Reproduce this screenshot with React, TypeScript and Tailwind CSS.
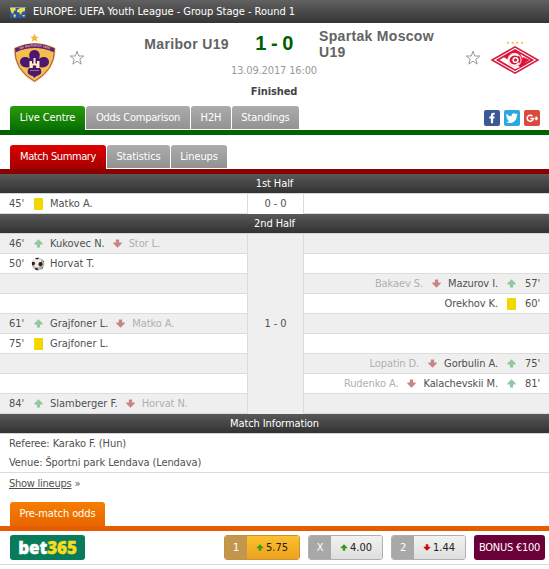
import clsx from 'clsx';

type EventIcon = 'sub' | 'card' | 'goal';

interface MatchEvent {
  side: 'home' | 'away';
  time: string;
  icon: EventIcon;
  player: string;
  off?: string;
}

const secondHalf: MatchEvent[] = [
  { side: 'home', time: "46'", icon: 'sub', player: 'Kukovec N.', off: 'Stor L.' },
  { side: 'home', time: "50'", icon: 'goal', player: 'Horvat T.' },
  { side: 'away', time: "57'", icon: 'sub', player: 'Mazurov I.', off: 'Bakaev S.' },
  { side: 'away', time: "60'", icon: 'card', player: 'Orekhov K.' },
  { side: 'home', time: "61'", icon: 'sub', player: 'Grajfoner L.', off: 'Matko A.' },
  { side: 'home', time: "75'", icon: 'card', player: 'Grajfoner L.' },
  { side: 'away', time: "75'", icon: 'sub', player: 'Gorbulin A.', off: 'Lopatin D.' },
  { side: 'away', time: "81'", icon: 'sub', player: 'Kalachevskii M.', off: 'Rudenko A.' },
  { side: 'home', time: "84'", icon: 'sub', player: 'Slamberger F.', off: 'Horvat N.' },
];

const firstHalf: MatchEvent[] = [
  { side: 'home', time: "45'", icon: 'card', player: 'Matko A.' },
];

function Arrow({ down, className }: { down?: boolean; className?: string }) {
  return (
    <svg viewBox="0 0 10 10" className={clsx('shrink-0', down && 'rotate-180', className)} fill="currentColor">
      <path d="M5 0.3 L9.7 5 V6 H6.8 V9.5 H3.2 V6 H0.3 V5 Z" />
    </svg>
  );
}

function Ball() {
  return (
    <svg viewBox="0 0 14 14" className="w-3.5 h-3.5">
      <circle cx="7" cy="7" r="6.3" fill="#bdb5ae" />
      <circle cx="6" cy="5.6" r="4.6" fill="#efebe7" />
      <path d="M4.2 0.9 L8.2 0.7 L7 2.2 L5 2.2 Z M1 5 L3.4 4.8 L4.2 7 L2.6 8.6 L1 8 Z M7.8 5.4 L10.6 4.8 L11.8 7.4 L9.8 9.6 L7.4 8.2 Z M4 11 L6.2 11 L7.4 13.3 L4.8 12.9 Z M11.4 2.8 L12.9 4.8 L12.2 5.2 Z M10.4 11.4 L12.6 9.6 L11 12.2 Z" fill="#2e211e" />
    </svg>
  );
}

function Icon({ type }: { type: EventIcon }) {
  return (
    <span className="w-3.5 flex justify-center shrink-0">
      {type === 'sub' && <Arrow className="w-[9px] h-[9px] text-[#8fc79f]" />}
      {type === 'card' && <span className="w-[9px] h-3 rounded-[1px] bg-[#f3d800]" />}
      {type === 'goal' && <Ball />}
    </span>
  );
}

function EventCell({ event, side, shaded }: { event: MatchEvent; side: 'home' | 'away'; shaded: boolean }) {
  return (
    <div
      className={clsx(
        'h-5 flex items-center border-b border-[#dcdcdc]',
        side === 'home' ? 'pl-[9px]' : 'pr-[9px] flex-row-reverse',
        shaded ? 'bg-[#efefef]' : 'bg-white',
      )}
    >
      {event.side === side && (
        <>
          <span className={clsx('w-[15px]', side === 'home' ? 'mr-[7px]' : 'ml-[7px]')}>{event.time}</span>
          <Icon type={event.icon} />
          <span className={side === 'home' ? 'ml-[5px] tracking-normal' : 'mr-[6px]'}>{event.player}</span>
          {event.off && (
            <>
              <Arrow down className={clsx('w-[9px] h-[9px] text-[#c98385]', side === 'home' ? 'ml-[8px] mr-[7px]' : 'mr-[7px] ml-[9px]')} />
              <span className="text-[#b0b0b0]">{event.off}</span>
            </>
          )}
        </>
      )}
    </div>
  );
}

function Half({ title, score, events, shadeFirst }: { title: string; score: string; events: MatchEvent[]; shadeFirst: boolean }) {
  return (
    <section>
      <DarkBar>{title}</DarkBar>
      <div className="grid grid-cols-[247px_57px_1fr]">
        <div>
          {events.map((e, i) => (
            <EventCell key={i} event={e} side="home" shaded={shadeFirst && i % 2 === 0} />
          ))}
        </div>
        <div className={clsx('flex items-center justify-center border-x border-[#dcdcdc]', shadeFirst && 'bg-[#efefef]')}>
          {score}
        </div>
        <div>
          {events.map((e, i) => (
            <EventCell key={i} event={e} side="away" shaded={shadeFirst && i % 2 === 0} />
          ))}
        </div>
      </div>
    </section>
  );
}

function DarkBar({ children }: { children: string }) {
  return (
    <div className="h-5 flex items-center justify-center text-white bg-linear-to-b from-[#595959] to-[#323232] border-b border-[#d5d5d5]">
      {children}
    </div>
  );
}

function Tab({ children, className }: { children: string; className: string }) {
  return (
    <span className={clsx('flex items-center justify-center rounded-t-[3px] text-white', className)}>
      {children}
    </span>
  );
}

const grayTab = 'h-[23px] bg-linear-to-b from-[#acacac] to-[#929292]';

function Star() {
  return (
    <svg viewBox="0 0 16 16" className="w-4 h-4" fill="#fff" stroke="#999" strokeWidth="1">
      <path d="M8 1.2 L9.7 6 H14.8 L10.8 9.1 L12.2 14.1 L8 11.2 L3.8 14.1 L5.2 9.1 L1.2 6 H6.3 Z" />
    </svg>
  );
}

function MariborCrest() {
  return (
    <svg viewBox="0 0 44 50" className="w-11 h-[50px] overflow-visible">
      <path d="M21.5 0.5 L22.8 3.7 H26 L23.4 5.6 L24.4 8.8 L21.5 7 L18.6 8.8 L19.6 5.6 L17 3.7 H20.2 Z" fill="#f0b62c" />
      <path d="M1 15 Q21.5 5 42.5 15 Q43 37 21.5 49.5 Q0 37 1 15 Z" fill="#f6bd4f" />
      <path d="M2 15.5 Q21.5 6 41.5 15.5 Q42 36.5 21.5 48.2 Q1 36.5 2 15.5 Z" fill="none" stroke="#8a4a6a" strokeWidth="0.9" />
      <path d="M2 15.5 Q21.5 6 41.5 15.5 L40.6 19.2 Q21.500 11 2.900 19.200 Z" fill="#5f2276" />
      <path id="crest-arc" d="M4 17.800 Q21.500 9.400 40 17.800" fill="none" />
      <text fontSize="3.4" fontWeight="bold" fill="#e7b48a" fontFamily="Liberation Sans" letterSpacing="0">
        <textPath href="#crest-arc" startOffset="3">NK MARIBOR 1960</textPath>
      </text>
      <path d="M21.5 17 C26 17 28 21 26 26 C30 22.5 36 24 36 29 C36 33 31 36 25 33.5 C27 34.5 29 37 28 40.5 C25.5 43 23 42.5 21.5 45 C20 42.5 17.5 43 15 40.5 C14 37 16 34.5 18 33.5 C12 36 7 33 7 29 C7 24 13 22.5 17 26 C15 21 17 17 21.5 17 Z" fill="#4b176f" />
      <path d="M16.5 35 V28 H19 V30.5 H20.5 V25 H22.5 V30.5 H24 V28 H26.5 V35 H23.2 V32.5 H19.8 V35 Z" fill="#fff0bd" />
      <path d="M17 37.5 H26" stroke="#a1708d" strokeWidth="1" />
    </svg>
  );
}

function SpartakCrest() {
  return (
    <svg viewBox="0 0 50 34" className="w-[50px] h-[34px]">
      <path d="M18 0.3 l.5 1 1 .1 -.7 .7 .2 1 -1-.5 -1 .5 .2-1 -.7-.7 1-.1z M22.7 0.3 l.5 1 1 .1 -.7 .7 .2 1 -1-.5 -1 .5 .2-1 -.7-.7 1-.1z M27.3 0.3 l.5 1 1 .1 -.7 .7 .2 1 -1-.5 -1 .5 .2-1 -.7-.7 1-.1z M32 0.3 l.5 1 1 .1 -.7 .7 .2 1 -1-.5 -1 .5 .2-1 -.7-.7 1-.1z" fill="#f0bd43" />
      <path d="M25 5 L49.5 19 L25 33 L0.5 19 Z" fill="#d9163b" />
      <path d="M25 6.800 L46.300 19 L25 31.200 L3.700 19 Z" fill="#fff" />
      <path d="M25 8 L44.200 19 L25 30 L5.800 19 Z" fill="#d9163b" />
      <path d="M9.500 19 L14 16.300 L30 26 L25 28.300 Z" fill="#fff" />
      <path d="M25 10 L40.500 19 L35.500 21.800 L30 12.900 Z" fill="#fff" />
      <path d="M33 16 L40 19 L31 24 Z" fill="#d9163b" />
      <circle cx="24.5" cy="19" r="6.6" fill="#d9163b" stroke="#fff" strokeWidth="1" />
      <path d="M28.5 14.8 Q25 12.5 21.5 14.5 Q18 17 19 20.5 Q21 25 26 24 L29.5 22" fill="none" stroke="#fff" strokeWidth="1.6" />
      <circle cx="25.5" cy="19" r="3.1" fill="#fff" />
      <path d="M25.5 17.2 L27.2 18.4 L26.6 20.4 H24.4 L23.8 18.4 Z" fill="#d9163b" />
    </svg>
  );
}

function EuropeFlag() {
  return (
    <svg viewBox="0 0 16 11" className="w-4 h-[11px]">
      <rect width="16" height="11" fill="#2f55a5" />
      <path d="M0 1 L5 0.5 L6 3 L4 4 L3 7 L1 5 Z M7 3 L10 1 L15 1 L15 4 L12 5 L11 8 L9 5.5 L7 5 Z M4 7 L6 8 L5 11 L3.5 9 Z M12 8 L15 8 L14 10 Z" fill="#e8e04a" />
      <path d="M0 0 H16 V0.8 H0 Z" fill="#8fb4c9" />
    </svg>
  );
}

function Social() {
  return (
    <div className="flex gap-1 mr-[9px]">
      <span className="w-4 h-4 rounded-[2px] bg-[#3b5998] flex items-center justify-center">
        <svg viewBox="0 0 16 16" className="w-4 h-4" fill="#fff">
          <path d="M6.9 13.2 V8.6 H5.3 V6.5 H6.9 V5.2 C6.9 3.6 7.9 2.8 9.3 2.8 H10.7 V4.8 H9.9 C9.3 4.8 9.1 5.1 9.1 5.6 V6.5 H10.7 L10.4 8.6 H9.1 V13.2 Z" />
        </svg>
      </span>
      <span className="w-4 h-4 rounded-[2px] bg-[#28a9e0] flex items-center justify-center">
        <svg viewBox="0 0 24 24" className="w-3 h-3" fill="#fff">
          <path d="M23.6 4.9a9.7 9.7 0 0 1-2.8.8 4.9 4.9 0 0 0 2.1-2.7c-1 .6-2 1-3.1 1.2a4.9 4.9 0 0 0-8.4 4.5A13.9 13.9 0 0 1 1.3 3.6a4.9 4.9 0 0 0 1.5 6.5c-.8 0-1.6-.2-2.2-.6v.1a4.9 4.9 0 0 0 3.9 4.8c-.7.2-1.500.2-2.200.1a4.900 4.900 0 0 0 4.600 3.400A9.900 9.900 0 0 1 0 20a13.900 13.900 0 0 0 7.500 2.200c9.100 0 14.300-7.700 14-14.600.9-.7 1.600-1.600 2.100-2.700z" />
        </svg>
      </span>
      <span className="w-4 h-4 rounded-[2px] bg-[#dc4a3d] flex items-center justify-center">
        <svg viewBox="0 0 16 16" className="w-4 h-4" fill="none" stroke="#fff" strokeWidth="1.5">
          <path d="M8.4 6.2 A3 3 0 1 0 9.2 8.4 H6.400 M12.3 6.6 V10.2 M10.5 8.4 H14.1" />
        </svg>
      </span>
    </div>
  );
}

interface OddProps {
  label: string;
  value: string;
  down?: boolean;
  active?: boolean;
}

function Odd({ label, value, down, active }: OddProps) {
  return (
    <span
      className={clsx(
        'h-[25px] flex rounded-[3px] border overflow-hidden',
        active ? 'w-[76px] border-[#c79339]' : 'w-[75px] border-[#b0b0b0]',
      )}
    >
      <span className={clsx('w-[22px] flex items-center justify-center text-white', active ? 'bg-[#c39650]' : 'bg-[#a8a8a8]')}>
        {label}
      </span>
      <span
        className={clsx(
          'flex-1 flex items-center gap-[2px] pl-[9px] text-[#222] tracking-normal',
          active ? 'bg-linear-to-b from-[#fbc12e] to-[#eda11d]' : 'bg-linear-to-b from-[#f2f2f2] to-[#dedede]',
        )}
      >
        <Arrow down={down} className={clsx('w-[8px] h-[7px]', down ? 'text-[#c80d14]' : 'text-[#3a9b14]')} />
        {value}
      </span>
    </span>
  );
}

export default function App() {
  return (
    <div className="w-[549px] h-[569px] overflow-hidden bg-white text-[11px] leading-[14px] whitespace-nowrap text-[#505050] font-['DejaVu_Sans_Condensed','DejaVu_Sans',sans-serif] font-stretch-condensed tracking-[-0.1px]">
      <div className="h-[23px] flex items-center pl-2.5 pt-px gap-[7px] text-white bg-linear-to-b from-[#616161] to-[#353535]">
        <EuropeFlag />
        <span className="tracking-[-0.03px]">EUROPE: UEFA Youth League - Group Stage - Round 1</span>
      </div>

      {/* Teams and score */}
      <header className="h-[83px] flex">
        <div className="w-[60px] pl-[13px] pt-[10px]"><MariborCrest /></div>
        <div className="w-[35px] pl-[9px] pt-[27px]"><Star /></div>
        <div className="w-[134px] pt-[13px] text-right text-sm leading-4 font-bold text-[#636363] font-['Liberation_Sans',sans-serif] tracking-[0.35px]">
          Maribor U19
        </div>
        <div className="w-[90px] flex flex-col items-center">
          <span className="mt-[8px] text-xl leading-6 font-bold text-[#006000] font-['Liberation_Sans',sans-serif] tracking-[-0.5px]">1 - 0</span>
          <span className="mt-[9px] text-[#9a9a9a] tracking-[-0.15px]">13.09.2017 16:00</span>
          <span className="mt-[7px] font-bold text-[#444]">Finished</span>
        </div>
        <div className="w-[146px] pt-[5px] text-sm leading-4 font-bold text-[#636363] font-['Liberation_Sans',sans-serif] tracking-[0.32px]">
          Spartak Moscow<br />U19
        </div>
        <div className="w-[25px] pt-[27px]"><Star /></div>
        <div className="pt-[18px]"><SpartakCrest /></div>
      </header>

      <nav className="h-[29px] flex items-start justify-between pl-2.5 border-b-[5px] border-[#006400]">
        <div className="flex gap-px">
          <Tab className="w-[75px] h-6 bg-linear-to-b from-[#279c08] to-[#067003]">Live Centre</Tab>
          <Tab className={clsx(grayTab, 'w-[104px] tracking-[-0.25px]')}>Odds Comparison</Tab>
          <Tab className={clsx(grayTab, 'w-10')}>H2H</Tab>
          <Tab className={clsx(grayTab, 'w-[67px]')}>Standings</Tab>
        </div>
        <div className="pt-1"><Social /></div>
      </nav>

      <nav className="mt-2.5 h-[29px] flex items-start gap-px pl-2.5 border-b-[5px] border-[#8b0000]">
        <Tab className="w-24 h-6 tracking-[-0.4px] bg-linear-to-b from-[#e00000] to-[#a30000]">Match Summary</Tab>
        <Tab className={clsx(grayTab, 'w-[63px]')}>Statistics</Tab>
        <Tab className={clsx(grayTab, 'w-14')}>Lineups</Tab>
      </nav>

      <Half title="1st Half" score="0 - 0" events={firstHalf} shadeFirst={false} />
      <Half title="2nd Half" score="1 - 0" events={secondHalf} shadeFirst />

      <DarkBar>Match Information</DarkBar>
      <div className="h-[39px] pl-[9px] border-b border-[#dcdcdc] leading-[19px]">
        <div>Referee: Karako F. (Hun)</div>
        <div>Venue: Športni park Lendava (Lendava)</div>
      </div>
      <div className="h-[29px] pl-[9px] pt-1">
        <span className="underline tracking-[-0.25px]">Show lineups</span> »
      </div>

      {/* Bookmaker odds */}
      <nav className="h-[29px] flex items-start pl-2.5 border-b-[5px] border-[#e65c00]">
        <Tab className="w-[95px] h-6 bg-linear-to-b from-[#f57e00] to-[#ea6500]">Pre-match odds</Tab>
      </nav>
      <div className="h-[34px] pt-1 pl-2.5 flex border-b border-[#dcdcdc]">
        <span className="w-[75px] h-[25px] mr-[139px] rounded-[3px] bg-[#087b5b] flex items-center justify-center text-[17px] leading-none font-extrabold text-white font-['Open_Sans',sans-serif] font-stretch-normal tracking-[-0.1px] [-webkit-text-stroke:0.4px_currentColor]">
          bet<span className="text-[#f9dc1c]">365</span>
        </span>
        <div className="flex gap-2">
          <Odd label="1" value="5.75" active />
          <Odd label="X" value="4.00" />
          <Odd label="2" value="1.44" down />
          <span className="w-[71px] h-[25px] rounded-[3px] bg-[#6b0038] text-white flex items-center justify-center tracking-[-0.25px]">
            BONUS €100
          </span>
        </div>
      </div>
    </div>
  );
}
